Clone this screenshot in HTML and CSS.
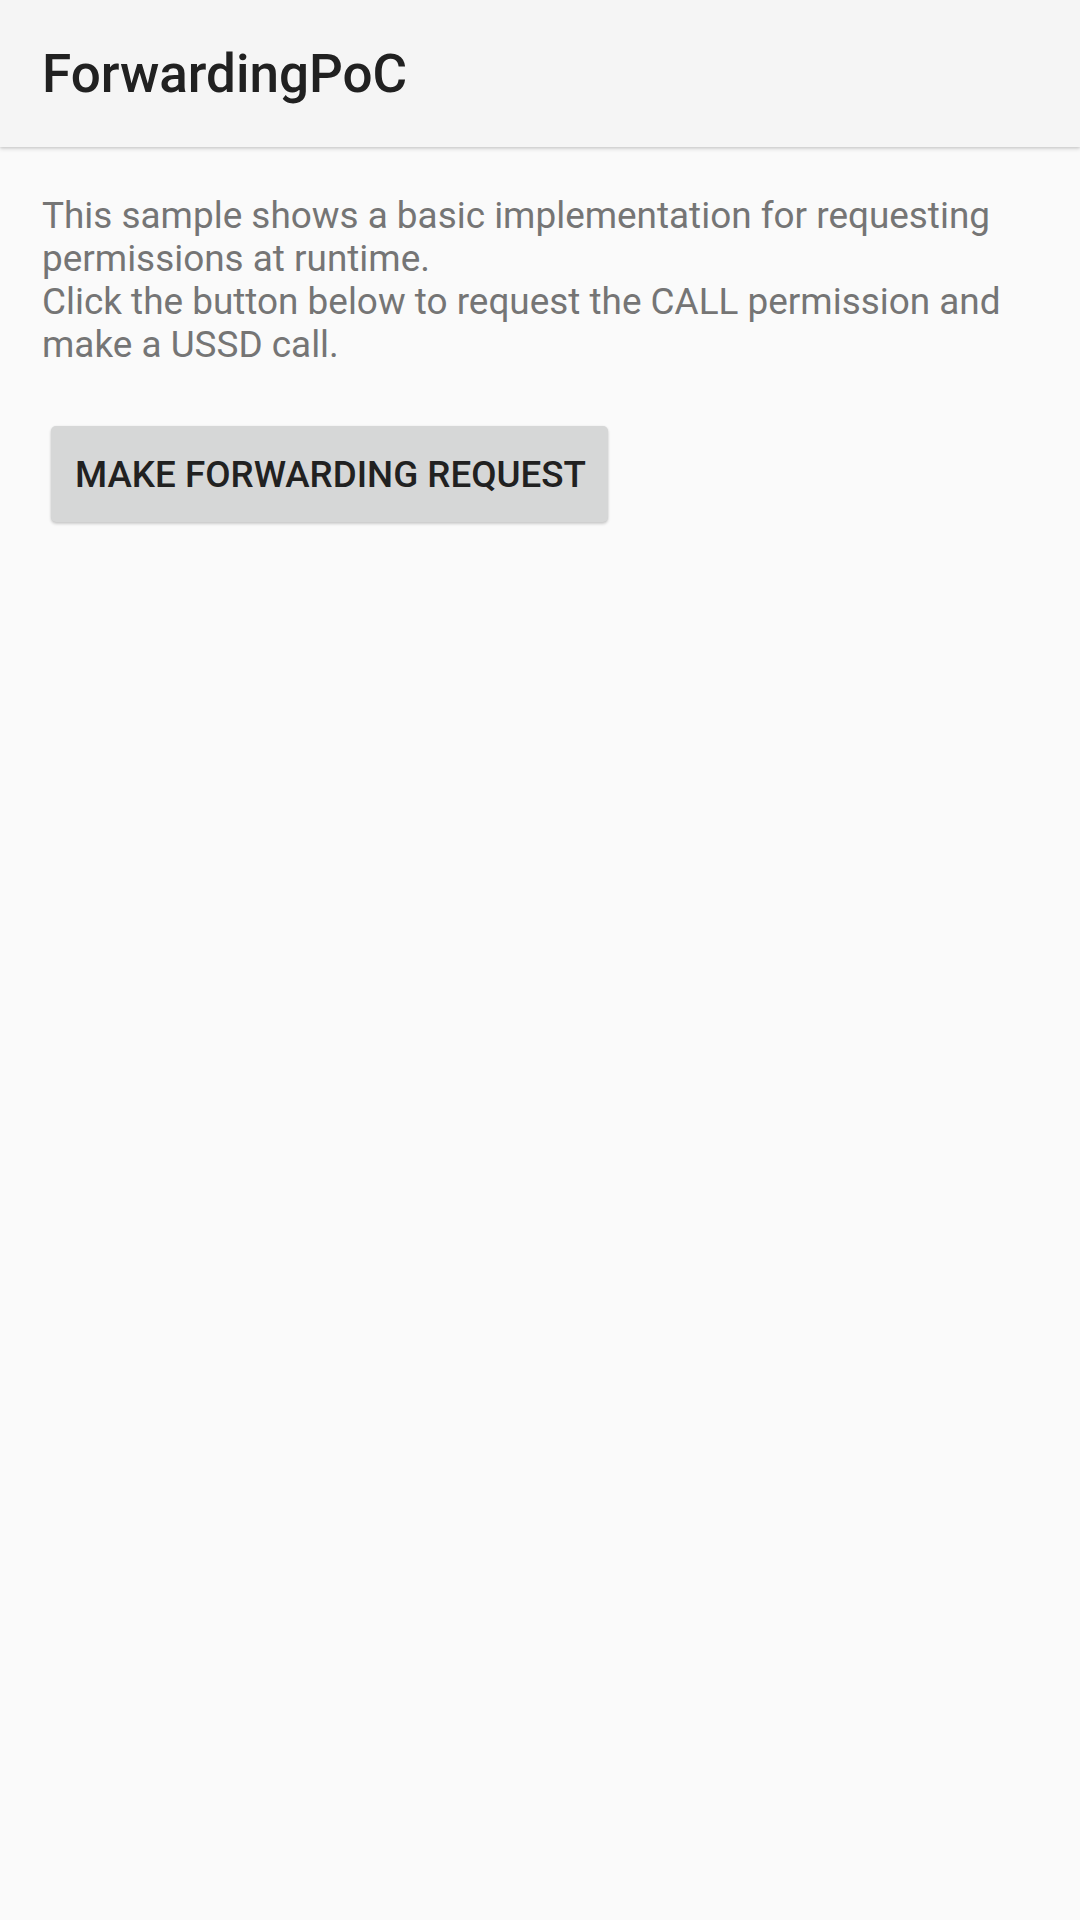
FILE: index.html
```html
<!DOCTYPE html>
<html>
<head>
<meta charset="utf-8">
<link rel="stylesheet" href="styles.css">
</head>
<body>
<header class="appbar"><h1 class="title">ForwardingPoC</h1></header>
<main class="content">
<p class="intro">This sample shows a basic implementation for requesting permissions at runtime.<br>Click the button below to request the CALL permission and make a USSD call.</p>
<button class="btn">MAKE FORWARDING REQUEST</button>
</main>
</body>
</html>
```
FILE: styles.css
```css
html, body {
  margin: 0;
  padding: 0;
  width: 1080px;
  height: 1920px;
  background: #fafafa;
  font-family: Roboto, "Noto Sans", sans-serif;
  overflow: hidden;
}
.appbar {
  height: 147px;
  background: #f5f5f5;
  display: flex;
  align-items: center;
  padding: 0 42px;
  box-shadow: 0 2px 4px rgba(0,0,0,0.14), 0 1px 2px rgba(0,0,0,0.08);
  position: relative;
  z-index: 1;
}
.title {
  margin: 0;
  font-size: 53px;
  font-weight: 500;
  color: #212121;
  line-height: 1;
  padding-top: 2px;
}
.content {
  padding: 47px 42px 0 42px;
}
.intro {
  margin: 0;
  font-size: 36.9px;
  line-height: 43px;
  color: #757575;
  width: 990px;
}
.btn {
  margin: 60px 0 0 9px;
  height: 96px;
  padding: 0 22px 0 24px;
  border: none;
  border-radius: 5px;
  background: #d6d7d7;
  color: #212121;
  font-family: Roboto, "Noto Sans", sans-serif;
  font-size: 36.75px;
  font-weight: 500;
  letter-spacing: 0;
  box-shadow: 0 2px 3px rgba(0,0,0,0.18), 0 0 2px rgba(0,0,0,0.08);
}
```
